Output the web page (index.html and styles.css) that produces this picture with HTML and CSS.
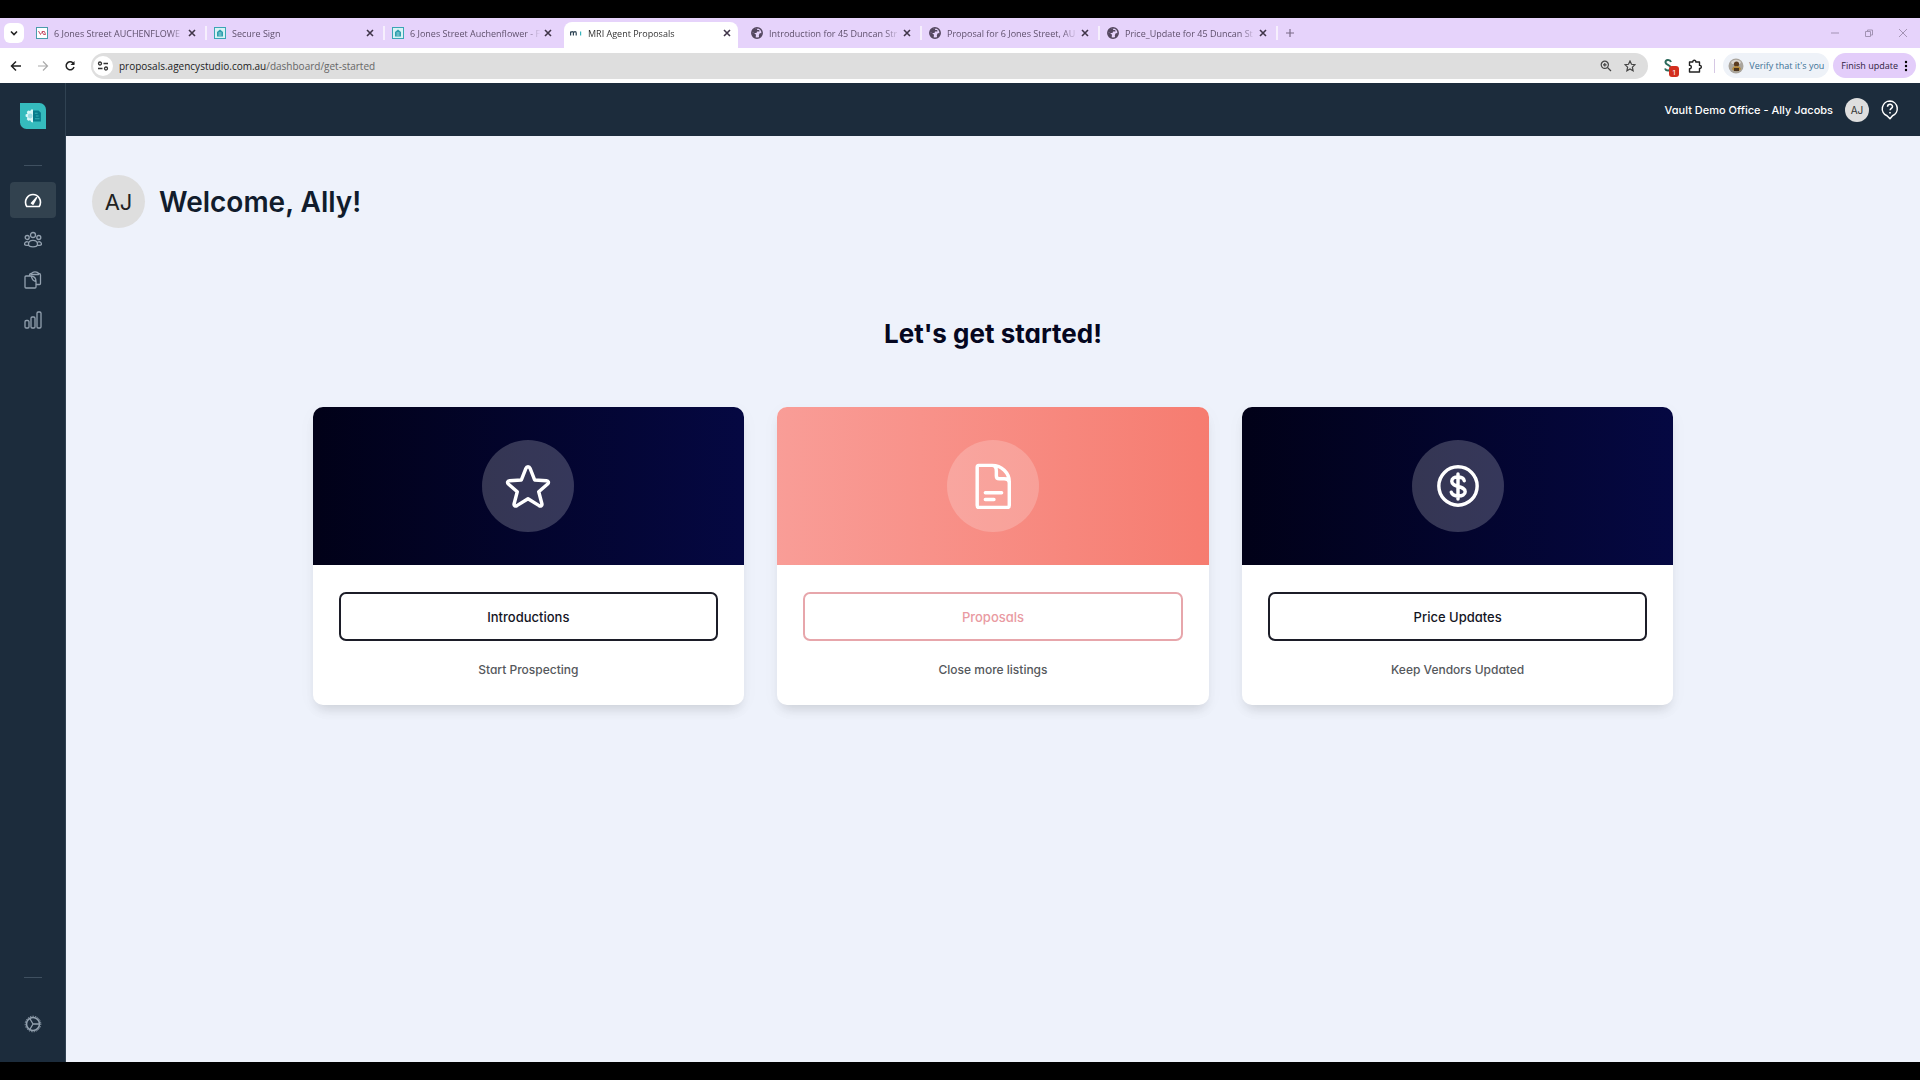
FILE: index.html
```html
<!DOCTYPE html>
<html lang="en">
<head>
    <meta charset="UTF-8">
    <meta name="viewport" content="width=device-width, initial-scale=1.0">
    <title>MRI Agent Proposals</title>
    <link rel="stylesheet" href="styles.css">
</head>
<body>

    <!-- Shared icons -->
    <svg class="sprite" width="0" height="0" aria-hidden="true">
        <symbol id="close" viewBox="0 0 10 10">
            <path d="M2 2l6 6M8 2L2 8" fill="none" stroke="currentColor" stroke-width="1.6"/>
        </symbol>
        <symbol id="globe" viewBox="0 0 12 12">
            <circle cx="6" cy="6" r="5.2" fill="#e6d3fb" stroke="#54475f" stroke-width="1.5"/>
            <path d="M6.500 1l-.5 2h2.200L8.500 4.500H6L5.500 6H3L1 5 1.500 2.500zM1 5.500l2.500.8 1.500 1.500-.5 3.500C2.500 11 1 8.500 1 5.500zM8.500 6.500l2.300-.8c.2 2.300-.8 4.100-2.600 4.900L7.800 8.500z" fill="#54475f"/>
        </symbol>
        <symbol id="vault" viewBox="0 0 12 12">
            <rect x=".5" y=".5" width="11" height="11" fill="#d8f2f4" stroke="#3aa6b4"/>
            <path d="M3 5l3-2.500L9 5v4.500H3z" fill="#2f9fae"/>
            <path d="M4.500 6h3M4.500 8h3" stroke="#bfe8ec" stroke-width=".8"/>
        </symbol>
    </svg>

    <header class="browser">
        <div class="tabs">
            <button class="tab-search" type="button" aria-label="Search tabs">
                <svg viewBox="0 0 10 10" width="10" height="10"><path d="M2 3.500l3 3 3-3" fill="none" stroke="#222" stroke-width="1.600"/></svg>
            </button>
            <div class="tab">
                <svg class="favicon" viewBox="0 0 12 12"><rect x=".5" y=".5" width="11" height="11" fill="#fff" stroke="#4a9cab"/><path d="M2.500 4l2 3.500 1-2M6 4.500l1.500 3h2L8.500 4.500z" fill="none" stroke="#c8506a"/></svg>
                <span class="tab-title">6 Jones Street AUCHENFLOWE</span>
                <button class="close" type="button" aria-label="Close tab"><svg><use href="#close"/></svg></button>
            </div>
            <div class="tab">
                <svg class="favicon"><use href="#vault"/></svg>
                <span class="tab-title">Secure Sign</span>
                <button class="close" type="button" aria-label="Close tab"><svg><use href="#close"/></svg></button>
            </div>
            <div class="tab before-active">
                <svg class="favicon"><use href="#vault"/></svg>
                <span class="tab-title">6 Jones Street Auchenflower - F</span>
                <button class="close" type="button" aria-label="Close tab"><svg><use href="#close"/></svg></button>
            </div>
            <div class="tab active">
                <svg class="favicon" viewBox="0 0 12 12"><path d="M.6 8.500v-4M.6 6c.6-1.800 2.800-1.800 2.800 0v2.500M3.400 6c.6-1.800 2.800-1.800 2.800 0v2.500" fill="none" stroke="#2b4152" stroke-width="1.200"/><path d="M10.600 4.500v4" stroke="#39b5bd" stroke-width="1.200"/></svg>
                <span class="tab-title">MRI Agent Proposals</span>
                <button class="close" type="button" aria-label="Close tab"><svg><use href="#close"/></svg></button>
            </div>
            <div class="tab">
                <svg class="favicon"><use href="#globe"/></svg>
                <span class="tab-title">Introduction for 45 Duncan Str</span>
                <button class="close" type="button" aria-label="Close tab"><svg><use href="#close"/></svg></button>
            </div>
            <div class="tab">
                <svg class="favicon"><use href="#globe"/></svg>
                <span class="tab-title">Proposal for 6 Jones Street, AU</span>
                <button class="close" type="button" aria-label="Close tab"><svg><use href="#close"/></svg></button>
            </div>
            <div class="tab">
                <svg class="favicon"><use href="#globe"/></svg>
                <span class="tab-title">Price_Update for 45 Duncan St</span>
                <button class="close" type="button" aria-label="Close tab"><svg><use href="#close"/></svg></button>
            </div>
            <button class="new-tab" type="button" aria-label="New tab">
                <svg viewBox="0 0 10 10" width="10" height="10"><path d="M5 1v8M1 5h8" stroke="#7a6b88" stroke-width="1.200"/></svg>
            </button>
            <div class="window-buttons">
                <button type="button" aria-label="Minimize"><svg viewBox="0 0 10 10"><path d="M1 5h8" stroke="#a393b4"/></svg></button>
                <button type="button" aria-label="Restore"><svg viewBox="0 0 10 10"><path d="M1.500 3.500h5v5h-5zM3.500 3.500v-1.500h5v5h-2" fill="none" stroke="#a393b4"/></svg></button>
                <button type="button" aria-label="Close"><svg viewBox="0 0 10 10"><path d="M1 1l8 8M9 1L1 9" stroke="#a393b4"/></svg></button>
            </div>
        </div>

        <div class="toolbar">
            <button type="button" aria-label="Back"><svg viewBox="0 0 12 12"><path d="M11 6H2M6 1.500L1.500 6 6 10.500" fill="none" stroke="#222" stroke-width="1.500"/></svg></button>
            <button type="button" aria-label="Forward"><svg viewBox="0 0 12 12"><path d="M1 6h9M6 1.500L10.500 6 6 10.500" fill="none" stroke="#aaa" stroke-width="1.200"/></svg></button>
            <button type="button" aria-label="Reload"><svg viewBox="0 0 12 12"><path d="M10 7a4 4 0 1 1-1-4l1 1" fill="none" stroke="#222" stroke-width="1.500"/><path d="M10.500 1v4h-4z" fill="#222"/></svg></button>
            <div class="address">
                <button class="site-info" type="button" aria-label="View site information">
                    <svg viewBox="0 0 12 12"><path d="M6.500 3.500h4.500M1 8.500h4.500" stroke="#333" stroke-width="1.300"/><circle cx="3" cy="3.500" r="1.500" fill="none" stroke="#333" stroke-width="1.300"/><circle cx="9" cy="8.500" r="1.500" fill="none" stroke="#333" stroke-width="1.300"/></svg>
                </button>
                <p class="url">proposals.agencystudio.com.au<span>/dashboard/get-started</span></p>
                <button type="button" aria-label="Zoom"><svg viewBox="0 0 12 12"><circle cx="4.800" cy="4.800" r="3.600" fill="none" stroke="#444" stroke-width="1.200"/><path d="M7.500 7.500l3.500 3.500M3 4.800h3.600M4.800 3v3.600" stroke="#444" stroke-width="1.200"/></svg></button>
                <button type="button" aria-label="Bookmark this tab"><svg viewBox="0 0 12 12"><path d="M6 1l1.500 3.300 3.500.4-2.600 2.400.7 3.600L6 8.900l-3.100 1.800.7-3.600L1 4.700l3.500-.4z" fill="none" stroke="#444" stroke-width="1.200"/></svg></button>
            </div>
            <button class="extension" type="button" aria-label="Extension, 1 notification">
                <svg viewBox="0 0 16 16"><path d="M10 4C9 1 4 1.500 4.500 4.500S10 7 10 10s-5 3.500-6 .5" fill="none" stroke="#2c6a5c" stroke-width="2"/></svg>
                <span class="badge">1</span>
            </button>
            <button class="puzzle" type="button" aria-label="Extensions"><svg viewBox="0 0 14 14"><path d="M1.500 3h3.300c-.4-2.400 3.400-2.400 3 0h3.700v3.400c2.400-.4 2.400 3.400 0 3V13h-10V9.600c2.400.3 2.400-3.500 0-3.200z" fill="none" stroke="#222" stroke-width="1.400" stroke-linejoin="round"/></svg></button>
            <span class="divider"></span>
            <button class="chip verify" type="button">
                <svg viewBox="0 0 16 16"><circle cx="8" cy="8" r="7.500" fill="#a9a49c"/><path d="M3 4c3-3 7-3 10 0l-1 2H4z" fill="#d8d4cf"/><circle cx="8.500" cy="6" r="2.600" fill="#5a3b20"/><path d="M4 11c1-4 8-4 9 0-2 3-7 3-9 0z" fill="#b58a3c"/><path d="M6 10h5v3H6z" fill="#4b351f"/></svg>
                Verify that it's you
            </button>
            <button class="chip finish" type="button">
                Finish update
                <svg viewBox="0 0 4 12"><circle cx="2" cy="2" r="1.200"/><circle cx="2" cy="6" r="1.200"/><circle cx="2" cy="10" r="1.200"/></svg>
            </button>
        </div>
    </header>

    <div class="app">
        <nav class="sidebar">
            <a class="logo" href="#" aria-label="Home">
                <svg viewBox="0 0 28 28"><path d="M0 0h21a7 7 0 0 1 7 7v21H7a7 7 0 0 1-7-7z" fill="#35bbbd"/><path d="M13 8h7l2.500 2.500V20H13z" fill="#087a8b"/><path d="M16 11h3M17 14h3M16 17h5" stroke="#35aeb5" stroke-width="1.200"/><path d="M14 7v14l-2-.5-1-2-2.200.7-1.500-1.700.7-2L6 14.500V12.500l2-.8-.7-2L8.800 8l2.200.7 1-1.700z" fill="#d9f7f8"/><circle cx="11" cy="14" r="2.600" fill="#9bdbe3"/></svg>
            </a>
            <hr>
            <a class="nav-item current" href="#" aria-label="Dashboard">
                <svg viewBox="0 0 18 18"><path d="M2.800 15.500h12.400c3.500-6-1-12-6.200-12s-9.700 6-6.200 12z" stroke-width="1.600"/><path d="M7.500 12.200l5-5.500-3.500 6.500z" stroke-width="1.600"/></svg>
            </a>
            <a class="nav-item" href="#" aria-label="Contacts">
                <svg viewBox="0 0 18 18"><circle cx="9" cy="4" r="2.500"/><circle cx="3.200" cy="6.500" r="2"/><circle cx="14.800" cy="6.500" r="2"/><path d="M4.500 13.300C4.500 8 13.500 8 13.500 13.300c0 3.500-9 3.500-9 0zM4 11c-2-.8-3.500.4-3.500 2.500.8.900 2 1 3.600.7M14 11c2-.8 3.500.4 3.500 2.500-.8.900-2 1-3.600.7"/></svg>
            </a>
            <a class="nav-item" href="#" aria-label="Documents">
                <svg viewBox="0 0 18 18"><path d="M2 5h5.500c3 .5 4.500 3 4.500 5.500V16c0 .8-.5 1-1 1H2c-.6 0-1-.4-1-1V6c0-.6.4-1 1-1zM7 5c1.500 1.500 0 4.500 5 5.500M5.500 5C5.500 3 6 2.500 7.500 2.500M14.500 2.500c1.500 0 2 .5 2 1.500v8.500c0 .8-.4 1-1 1H12"/><path d="M7.500 3.500C7.500 0 14.500 0 14.500 3.500z"/></svg>
            </a>
            <a class="nav-item" href="#" aria-label="Reports">
                <svg viewBox="0 0 18 18"><rect x="1" y="9.500" width="4" height="7.500" rx="1.200"/><rect x="7" y="6" width="4" height="11" rx="1.200"/><rect x="13" y="1" width="4" height="16" rx="1.200"/></svg>
            </a>
            <hr class="bottom-rule">
            <a class="nav-item" href="#" aria-label="Settings">
                <svg viewBox="0 0 18 18"><circle cx="9" cy="9" r="6.500" stroke-width="1.600"/><circle cx="9" cy="9" r="7.800" stroke-dasharray=".6 2" stroke-width="1"/><path d="M9 9h6.500M9 9L5.800 3.500M9 9l-3.200 5.500"/></svg>
            </a>
        </nav>

        <div class="content">
            <div class="topbar">
                <span>Vault Demo Office - Ally Jacobs</span>
                <span class="avatar">AJ</span>
                <button class="help" type="button" aria-label="Help">
                    <svg viewBox="0 0 18 20"><path d="M9 1a7.700 7.700 0 0 0-3 14.800L9 18.700l2.500-2.900A7.700 7.700 0 0 0 9 1z"/><path d="M6.500 6.700c.2-3.300 5.200-3 5 0-.1 1.700-2.400 1.800-2.400 3.600M9 12v1.500"/></svg>
                </button>
            </div>

            <main>
                <div class="welcome">
                    <span class="avatar large">AJ</span>
                    <h1>Welcome, Ally!</h1>
                </div>

                <h2>Let's get started!</h2>

                <div class="cards">
                    <section class="card">
                        <div class="banner">
                            <span class="circle"><svg viewBox="0 0 48 48"><path d="M24 4c1 0 1.800.6 2.200 1.600l4.700 12.100 12.400.8c2 .2 2.700 2 1.200 3.400L35.200 30l3.300 12.500c.5 2-1.200 3-2.900 2L24 37.300l-11.600 7.200c-1.700 1-3.400 0-2.900-2L12.800 30l-9.300-8.100c-1.500-1.400-.8-3.200 1.200-3.400l12.400-.8 4.700-12.100C22.200 4.600 23 4 24 4z"/></svg></span>
                        </div>
                        <div class="card-body">
                            <button class="card-button" type="button">Introductions</button>
                            <p>Start Prospecting</p>
                        </div>
                    </section>
                    <section class="card pink">
                        <div class="banner">
                            <span class="circle"><svg viewBox="0 0 48 48"><path d="M9 2.500h14c10 0 18 8 18 17V44c0 1.500-1 2.500-2.500 2.500h-29C8 46.500 7.500 45.500 7.500 44V4.500c0-1 .5-2 1.500-2zM23 2.500c4 0 4.500 3 4.500 6v5c0 2 1 3 3 3h5c3 0 5 1 5.500 4M16 31h17M16 38h9"/></svg></span>
                        </div>
                        <div class="card-body">
                            <button class="card-button" type="button">Proposals</button>
                            <p>Close more listings</p>
                        </div>
                    </section>
                    <section class="card">
                        <div class="banner">
                            <span class="circle"><svg viewBox="0 0 48 48"><circle cx="24" cy="24" r="20"/><path d="M24 11.500v26M30.500 18.500c-1-5-13-5.500-13 .5 0 7 14 4 14 11 0 6-13 5.500-14.500.5"/></svg></span>
                        </div>
                        <div class="card-body">
                            <button class="card-button" type="button">Price Updates</button>
                            <p>Keep Vendors Updated</p>
                        </div>
                    </section>
                </div>
            </main>
        </div>
    </div>

</body>
</html>
```
FILE: styles.css
```css
* {
    box-sizing: border-box;
}
body {
    display: flex;
    flex-direction: column;
    min-height: 100vh;
    margin: 0;
    padding: 18px 0;
    background-color: #000;
    font-family: Inter, sans-serif;
    font-feature-settings: "cv11";
}
button {
    display: flex;
    align-items: center;
    justify-content: center;
    padding: 0;
    border: none;
    background: none;
    font: inherit;
    font-feature-settings: inherit;
    cursor: pointer;
}
.sprite {
    position: absolute;
}

/* Browser bars */
.browser {
    background-color: #fff;
    font-family: "Open Sans", sans-serif;
    font-size: 9px;
}
.tabs {
    display: flex;
    align-items: flex-end;
    height: 30px;
    padding-left: 4px;
    background-color: #e6d3fb;
}
.tab-search {
    align-self: center;
    width: 20px;
    height: 20px;
    margin-right: 6px;
    border-radius: 6px;
    background-color: #fff;
}
.tab {
    display: flex;
    align-items: center;
    flex: 0 1 178px;
    min-width: 0;
    height: 26px;
    padding: 0 9px 4px 6px;
    color: #5f506c;
}
.tab::after {
    content: "";
    order: 4;
    width: 2px;
    height: 14px;
    margin-left: 8px;
    margin-right: -8px;
    background-color: #f6effd;
}
.tab.active {
    flex-basis: 174px;
    margin-right: 7px;
    padding-right: 4px;
    border-radius: 8px 8px 0 0;
    background-color: #fff;
    color: #333;
}
.tab.active::after, .tab.before-active::after {
    background: none;
}
.favicon {
    flex: none;
    width: 12px;
    height: 12px;
    margin-right: 6px;
}
.tab-title {
    flex: 1;
    overflow: hidden;
    white-space: nowrap;
    mask-image: linear-gradient(to right, #000 88%, transparent);
}
.close {
    flex: none;
    width: 10px;
    margin-left: 2px;
    color: #403549;
}
.close svg {
    width: 10px;
    height: 10px;
}
.new-tab {
    align-self: center;
    margin-left: 6px;
}
.window-buttons {
    display: flex;
    align-self: center;
    gap: 24px;
    margin-left: auto;
    margin-right: 12px;
}
.window-buttons svg {
    width: 10px;
    height: 10px;
}
.toolbar {
    display: flex;
    align-items: center;
    height: 35px;
    padding: 0 4px 0 10px;
}
.toolbar svg {
    width: 12px;
    height: 12px;
}
.toolbar > button {
    flex: none;
}
.toolbar > button:nth-child(-n+3) {
    margin-right: 15px;
}
.address {
    display: flex;
    align-items: center;
    flex: 1;
    gap: 12px;
    height: 26px;
    padding: 0 12px 0 2px;
    border-radius: 13px;
    background-color: #dedede;
}
.site-info {
    width: 20px;
    height: 20px;
    border-radius: 50%;
    background-color: #fff;
}
.url {
    flex: 1;
    margin: 0 0 0 -6px;
    color: #222;
    font-size: 10px;
}
.url span {
    color: #666;
}
.extension {
    position: relative;
    margin-left: 13px;
}
.toolbar .extension svg {
    width: 16px;
    height: 16px;
}
.badge {
    position: absolute;
    right: -2px;
    bottom: -3px;
    width: 10px;
    height: 11px;
    border-radius: 3px;
    background-color: #d32f1e;
    color: #fff;
    font-size: 8px;
    line-height: 11px;
}
.toolbar .puzzle svg {
    width: 14px;
    height: 14px;
}
.puzzle {
    margin-left: 11px;
}
.divider {
    width: 1px;
    height: 14px;
    margin: 0 8px 0 12px;
    background-color: #d6c8e4;
}
.chip {
    height: 25px;
    border-radius: 13px;
    white-space: nowrap;
}
.verify {
    gap: 5px;
    padding: 0 5px;
    background-color: #eef2f8;
    color: #3c7196;
}
.toolbar .verify svg {
    width: 16px;
    height: 16px;
}
.finish {
    gap: 6px;
    margin-left: 4px;
    padding: 0 8px;
    background-color: #e3cdfa;
    color: #2e2140;
}
.toolbar .finish svg {
    width: 4px;
}

/* Sidebar */
.app {
    display: flex;
    flex: 1;
    background-color: #eef2fb;
}
.sidebar {
    display: flex;
    flex-direction: column;
    align-items: center;
    gap: 4px;
    width: 66px;
    padding: 20px 0;
    border-right: 1px solid #304252;
    background-color: #1c2c3c;
}
.logo {
    height: 26px;
    margin-bottom: 32px;
}
.logo svg {
    width: 26px;
    height: 26px;
}
.sidebar hr {
    width: 18px;
    margin: 0 0 12px;
    border: none;
    border-top: 1px solid #3f5060;
}
.sidebar .bottom-rule {
    margin: auto 0 24px;
}
.nav-item {
    display: flex;
    align-items: center;
    justify-content: center;
    width: 46px;
    height: 36px;
    border-radius: 4px;
    color: #93a1af;
}
.nav-item.current {
    background-color: #32424f;
    color: #fff;
}
.nav-item svg {
    width: 18px;
    height: 18px;
    fill: none;
    stroke: currentColor;
    stroke-width: 1.3;
    stroke-linejoin: round;
    stroke-linecap: round;
}

/* Page */
.content {
    flex: 1;
}
.topbar {
    display: flex;
    align-items: center;
    justify-content: flex-end;
    gap: 12px;
    height: 53px;
    padding-right: 21px;
    background-color: #1c2c3c;
    color: #fff;
    font-size: 11px;
    font-weight: 500;
}
.avatar {
    display: flex;
    align-items: center;
    justify-content: center;
    width: 24px;
    height: 24px;
    border-radius: 50%;
    background-color: #dedede;
    color: #333;
    font-size: 10px;
    font-weight: 400;
}
.avatar.large {
    width: 53px;
    height: 53px;
    color: #222;
    font-size: 22px;
}
.help svg {
    width: 18px;
    height: 20px;
    fill: none;
    stroke: #fff;
    stroke-width: 1.5;
    stroke-linejoin: round;
}
main {
    padding: 39px 26px;
}
.welcome {
    display: flex;
    align-items: center;
    gap: 14px;
}
h1 {
    margin: 0;
    color: #111c2c;
    font-size: 28px;
    font-weight: 600;
}
h2 {
    margin: 88px 0 55px;
    color: #050720;
    font-size: 26px;
    font-weight: 700;
    line-height: 36px;
    text-align: center;
}
.cards {
    display: grid;
    grid-template-columns: repeat(3, 1fr);
    gap: 33px;
    max-width: 1361px;
    margin: 0 auto;
}
.card {
    overflow: hidden;
    border-radius: 10px;
    background-color: #fff;
    box-shadow: 0 8px 12px -4px rgba(0, 0, 0, 0.12), 0 4px 20px rgba(0, 0, 0, 0.03);
}
.banner {
    display: flex;
    align-items: center;
    justify-content: center;
    height: 158px;
    background: linear-gradient(to right, #010118, #050842);
}
.pink .banner {
    background: linear-gradient(to right, #f99d97, #f67c70);
}
.circle {
    display: flex;
    align-items: center;
    justify-content: center;
    width: 92px;
    height: 92px;
    border-radius: 50%;
    background-color: rgba(255, 255, 255, 0.2);
}
.circle svg {
    width: 46px;
    height: 46px;
    fill: none;
    stroke: #fff;
    stroke-width: 3.6;
    stroke-linejoin: round;
    stroke-linecap: round;
}
.card-body {
    padding: 27px 26px 26px;
}
.card-button {
    width: 100%;
    height: 49px;
    border: 2px solid #1c1d28;
    border-radius: 7px;
    color: #14151f;
    font-size: 13px;
    font-weight: 500;
}
.pink .card-button {
    border-color: #e7a6ab;
    color: #e99aa2;
}
.card p {
    margin: 20px 0 0;
    color: #55585c;
    font-size: 12px;
    font-weight: 500;
    line-height: 18px;
    text-align: center;
}
```
